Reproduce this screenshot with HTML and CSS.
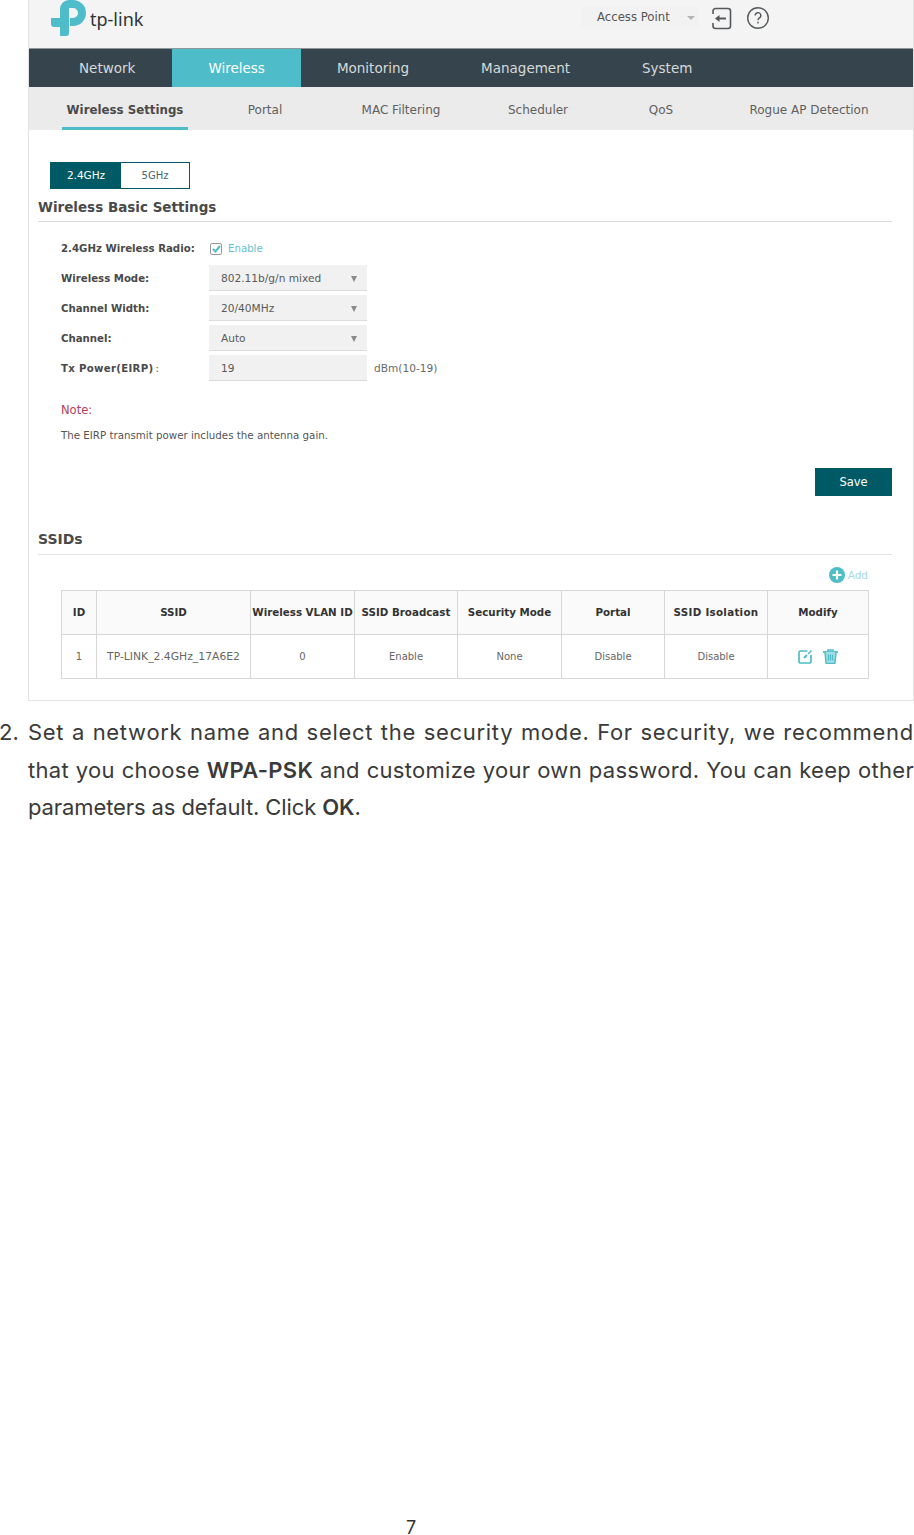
FILE: index.html
```html
<!DOCTYPE html>
<html lang="en">
<head>
  <meta charset="UTF-8" />
  <title>Wireless Settings</title>
  <link rel="stylesheet" href="styles.css">
</head>
<body>

<div class="shot">
  <header class="topbar">
    <div class="logo">
      <svg width="36" height="37" viewBox="0 0 36 37">
        <path fill="#4fbcc9" d="M9 9A9 9 0 0 1 18 0H22A13 13 0 0 1 22 26H19V18H22A5 5 0 0 0 22 8H18V33Q18 36 15 36H9z"/>
        <path fill="#4fbcc9" d="M0 18H9V27H3A3 3 0 0 1 0 24z"/>
      </svg>
      <span class="logo-text">tp-link</span>
    </div>
    <div class="top-tools">
      <div class="mode">Access Point <span class="mode-arrow"></span></div>
      <svg class="tool" width="22" height="24" viewBox="0 0 22 24" fill="none" stroke="#55595c" stroke-width="1.600">
        <path d="M3 8V5a2.500 2.500 0 0 1 2.500-2.500H18A2.500 2.500 0 0 1 20.500 5v15a2.500 2.500 0 0 1-2.500 2.500H5.500A2.500 2.500 0 0 1 3 20v-3"/>
        <path d="M9 12.500h7" stroke-width="2"/>
        <path d="M9.500 9v7L5 12.500z" fill="#55595c" stroke="none"/>
      </svg>
      <svg class="tool" width="24" height="24" viewBox="0 0 24 24" fill="none" stroke="#55595c" stroke-width="1.400">
        <circle cx="12" cy="12" r="10.300"/>
        <path d="M9.200 9.500a2.800 2.800 0 1 1 4.200 2.400c-1 .6-1.400 1.100-1.400 2.300"/>
        <path d="M12 15.800v1.700"/>
      </svg>
    </div>
  </header>

  <nav class="mainnav">
    <a class="mainnav-item">Network</a>
    <a class="mainnav-item active">Wireless</a>
    <a class="mainnav-item">Monitoring</a>
    <a class="mainnav-item">Management</a>
    <a class="mainnav-item">System</a>
  </nav>

  <nav class="subnav">
    <a class="subnav-item current">Wireless Settings</a>
    <a class="subnav-item s-portal">Portal</a>
    <a class="subnav-item s-mac">MAC Filtering</a>
    <a class="subnav-item s-sched">Scheduler</a>
    <a class="subnav-item s-qos">QoS</a>
    <a class="subnav-item s-rogue">Rogue AP Detection</a>
  </nav>

  <main class="content">
    <div class="band-tabs">
      <span class="band on">2.4GHz</span>
      <span class="band">5GHz</span>
    </div>

    <h2 class="block-title">Wireless Basic Settings</h2>

    <div class="form">
      <div class="row row-check">
        <label>2.4GHz Wireless Radio:</label>
        <span class="checkbox">
          <svg width="9" height="8" viewBox="0 0 9 8" fill="none" stroke="#4fbcc9" stroke-width="2"><path d="M1 4l2.500 2.500L8 1"/></svg>
        </span>
        <span class="enable">Enable</span>
      </div>
      <div class="row">
        <label>Wireless Mode:</label>
        <div class="field">802.11b/g/n mixed<i class="caret"></i></div>
      </div>
      <div class="row">
        <label>Channel Width:</label>
        <div class="field">20/40MHz<i class="caret"></i></div>
      </div>
      <div class="row">
        <label>Channel:</label>
        <div class="field">Auto<i class="caret"></i></div>
      </div>
      <div class="row">
        <label class="label-wide">Tx Power(EIRP)<span class="thin">:</span></label>
        <div class="field">19</div>
        <span class="unit">dBm(10-19)</span>
      </div>
    </div>

    <p class="note-title">Note:</p>
    <p class="note">The EIRP transmit power includes the antenna gain.</p>

    <div class="actions"><button class="save">Save</button></div>

    <h2 class="block-title ssids">SSIDs</h2>

    <div class="add">
      <svg width="16" height="16" viewBox="0 0 16 16"><circle cx="8" cy="8" r="8" fill="#4fbcc9"/><path d="M8 3.500v9M3.500 8h9" stroke="#fff" stroke-width="2.200"/></svg>
      <span>Add</span>
    </div>

    <table class="ssid-table">
      <thead>
        <tr>
          <th>ID</th><th>SSID</th><th>Wireless VLAN ID</th><th>SSID Broadcast</th>
          <th>Security Mode</th><th>Portal</th><th class="spaced">SSID Isolation</th><th>Modify</th>
        </tr>
      </thead>
      <tbody>
        <tr>
          <td>1</td><td class="ssid-name">TP-LINK_2.4GHz_17A6E2</td><td>0</td><td>Enable</td>
          <td>None</td><td>Disable</td><td>Disable</td>
          <td class="icons">
            <svg width="15" height="15" viewBox="0 0 15 15" fill="none" stroke="#4fbcc9" stroke-width="1.700">
              <path d="M9.500 2H2.500A1.500 1.500 0 0 0 1 3.500v9A1.500 1.500 0 0 0 2.500 14h9a1.500 1.500 0 0 0 1.500-1.500V6"/>
              <path d="M6 9l3-3" stroke-width="2"/>
              <path d="M10 5l3.500-3.500" stroke-width="1.600"/>
            </svg>
            <svg width="15" height="15" viewBox="0 0 15 15" fill="none" stroke="#4fbcc9" stroke-width="1.500">
              <path d="M0 3h15" stroke-width="1.800"/>
              <path d="M5 3V1h5v2"/>
              <path d="M2 3l1 10.500a1 1 0 0 0 1 1h7a1 1 0 0 0 1-1L13 3" fill="#a6dde4"/>
              <path d="M5.500 5.500v6M7.500 5.500v6M9.500 5.500v6" stroke-width="1.200"/>
            </svg>
          </td>
        </tr>
      </tbody>
    </table>
  </main>
</div>

<div class="step">
  <span class="step-num">2.</span>
  <p class="step-text">
    <span class="line line-1">Set a network name and select the security mode. For security, we recommend</span>
    <span class="line line-2">that you choose <b>WPA-PSK</b> and customize your own password. You can keep other</span>
    <span class="line-3">parameters as default. Click <b>OK</b>.</span>
  </p>
</div>

<div class="page-num">7</div>

</body>
</html>
```

FILE: styles.css
```css
body {
  margin: 0;
  height: 1535px;
  overflow: hidden;
  background: #fff;
  color: #4a4a4a;
  font-family: "DejaVu Sans", sans-serif;
  display: flex;
  flex-direction: column;
}

/* screenshot of the router page */
.shot {
  margin-left: 28px;
  width: 886px;
  height: 701px;
  box-sizing: border-box;
  border: 1px solid #e3e3e3;
  border-top: none;
  flex: none;
}

.topbar {
  height: 49px;
  background: #f4f4f4;
  display: flex;
  justify-content: space-between;
  border-bottom: 1px solid #8f979b;
  box-sizing: border-box;
}

.logo {
  display: flex;
  margin-left: 22px;
  align-items: flex-start;
}

.logo-text {
  font-family: "Noto Sans", sans-serif;
  font-size: 18px;
  color: #2f3437;
  margin: 7px 0 0 3px;
}

.top-tools {
  display: flex;
  align-items: flex-start;
  padding: 6px 143px 0 0;
}

.mode {
  width: 118px;
  height: 22px;
  background: #f2f2f2;
  font-size: 11.700px;
  line-height: 23px;
  padding-left: 16px;
  box-sizing: border-box;
  color: #555;
  position: relative;
}

.mode-arrow {
  position: absolute;
  right: 4px;
  top: 10px;
  border-left: 4px solid transparent;
  border-right: 4px solid transparent;
  border-top: 4px solid #b5b5b5;
}

.tool {
  margin-left: 11px;
  flex: none;
}

.tool + .tool {
  margin-left: 14px;
}

.mainnav {
  height: 38px;
  background: #36454d;
  display: flex;
  padding-left: 14px;
}

.mainnav-item {
  padding: 0 36px;
  line-height: 38px;
  font-size: 13.500px;
  color: #d6d9da;
  flex: none;
}

.mainnav-item:first-child {
  padding-right: 37px;
}

.mainnav-item.active {
  background: #4fbcc9;
  color: #fff;
}

.subnav {
  height: 43px;
  background: #ebebeb;
  display: flex;
  font-size: 12px;
  color: #5f5f5f;
  line-height: 40px;
}

.subnav-item {
  flex: none;
  text-align: center;
  padding-top: 3px;
  box-sizing: border-box;
}

.subnav-item.current {
  margin-left: 33px;
  width: 126px;
  border-bottom: 3px solid #4fbcc9;
  font-weight: bold;
  font-size: 11.800px;
  color: #4a4a4a;
}

.s-portal { width: 154px; }
.s-mac { width: 118px; }
.s-sched { width: 156px; }
.s-qos { width: 90px; }
.s-rogue { width: 206px; }

.content {
  padding: 32px 21px 0 9px;
}

.band-tabs {
  display: flex;
  width: 140px;
  height: 27px;
  margin-left: 12px;
  box-sizing: border-box;
  border: 1px solid #005a66;
  font-size: 10px;
  line-height: 25px;
  text-align: center;
}

.band {
  flex: 1;
  color: #3f6a70;
}

.band.on {
  flex: none;
  width: 70px;
  background: #005a66;
  color: #fff;
  font-size: 10.500px;
}

.block-title {
  margin: 10px 0 0;
  padding-bottom: 5px;
  font-size: 13.500px;
  line-height: 17px;
  color: #4a4a4a;
  border-bottom: 1px solid #d9d9d9;
}

.form {
  margin: 15px 0 0 23px;
  font-size: 10.600px;
}

.row {
  display: flex;
  align-items: center;
  height: 26px;
  margin-bottom: 4px;
}

.row-check {
  height: 23px;
  margin-bottom: 5px;
}

.row label {
  width: 148px;
  flex: none;
  font-size: 10.200px;
  font-weight: bold;
  color: #4a4a4a;
}

.row .label-wide {
  letter-spacing: 0.3px;
}

.thin {
  font-weight: normal;
  margin-left: 2px;
}

.checkbox {
  width: 10px;
  height: 10px;
  border: 1px solid #9a9a9a;
  border-radius: 2px;
  margin-left: 1px;
  display: flex;
  align-items: center;
  justify-content: center;
}

.enable {
  color: #63c1cd;
  font-size: 10.200px;
  margin-left: 6px;
}

.field {
  width: 158px;
  height: 26px;
  box-sizing: border-box;
  background: #f1f1f1;
  border-bottom: 1px solid #dcdcdc;
  padding-left: 12px;
  line-height: 26px;
  color: #5a5a5a;
  position: relative;
}

.caret {
  position: absolute;
  right: 10px;
  top: 11px;
  border-left: 3.500px solid transparent;
  border-right: 3.500px solid transparent;
  border-top: 6px solid #8a8a8a;
}

.unit {
  margin-left: 7px;
  color: #6a6a6a;
}

.note-title {
  margin: 22px 0 0 23px;
  font-size: 11.500px;
  line-height: 14px;
  color: #b4405f;
}

.note {
  margin: 11px 0 0 23px;
  font-size: 10.270px;
  line-height: 14px;
  color: #555;
}

.actions {
  display: flex;
  justify-content: flex-end;
  margin-top: 26px;
}

.save {
  width: 77px;
  height: 28px;
  border: none;
  background: #005a66;
  color: #fff;
  font-family: inherit;
  font-size: 11.500px;
  padding: 0;
}

.block-title.ssids {
  margin-top: 35px;
  border-bottom-color: #e3e3e3;
  padding-bottom: 6px;
  font-size: 14px;
}

.add {
  display: flex;
  justify-content: flex-end;
  align-items: center;
  gap: 3px;
  height: 16px;
  margin-top: 12px;
  padding-right: 24px;
  font-size: 10.500px;
  color: #a5dbe2;
}

.ssid-table {
  margin: 7px 0 0 23px;
  width: 808px;
  border-collapse: collapse;
  table-layout: fixed;
  font-size: 10px;
  text-align: center;
}

.ssid-table th,
.ssid-table td {
  border: 1px solid #d7d7d7;
  height: 44px;
  padding: 0;
  white-space: nowrap;
  box-sizing: border-box;
}

.ssid-table th {
  background: #fafafa;
  color: #333;
  font-size: 10.300px;
  padding-bottom: 2px;
}

.ssid-table th:nth-child(1) { width: 35px; }
.ssid-table th:nth-child(2) { width: 154px; }
.ssid-table th:nth-child(3) { width: 104px; }
.ssid-table th:nth-child(4) { width: 103px; }
.ssid-table th:nth-child(5) { width: 104px; }
.ssid-table th:nth-child(6) { width: 103px; }
.ssid-table th:nth-child(7) { width: 103px; }

.ssid-table th.spaced {
  letter-spacing: 0.3px;
}

.ssid-table td {
  color: #666;
}

.ssid-table td.ssid-name {
  font-size: 10.800px;
}

.ssid-table td.icons {
  font-size: 0;
}

.icons svg {
  vertical-align: middle;
  margin: 0 5px;
}

/* manual text under the screenshot */
.step {
  display: flex;
  margin-top: 13px;
  font-family: Inter, "Noto Sans", sans-serif;
  font-size: 22px;
  line-height: 37.500px;
  color: #3a3a3a;
  flex: none;
}

.step-num {
  width: 28px;
  flex: none;
  margin-left: -1px;
  padding-right: 1px;
  box-sizing: content-box;
}

.step-text {
  margin: 0;
  width: 886px;
}

.line {
  display: block;
  text-align: justify;
  text-align-last: justify;
  white-space: nowrap;
}

.line-1 {
  letter-spacing: 0.7px;
}

.line-2 {
  letter-spacing: 0.3px;
}

.line-3 {
  letter-spacing: -0.1px;
}

.step b {
  font-weight: 600;
}

.page-num {
  margin-top: auto;
  padding-right: 92px;
  text-align: center;
  font-family: Inter, sans-serif;
  font-size: 18px;
  line-height: 14px;
  color: #333;
}
```
